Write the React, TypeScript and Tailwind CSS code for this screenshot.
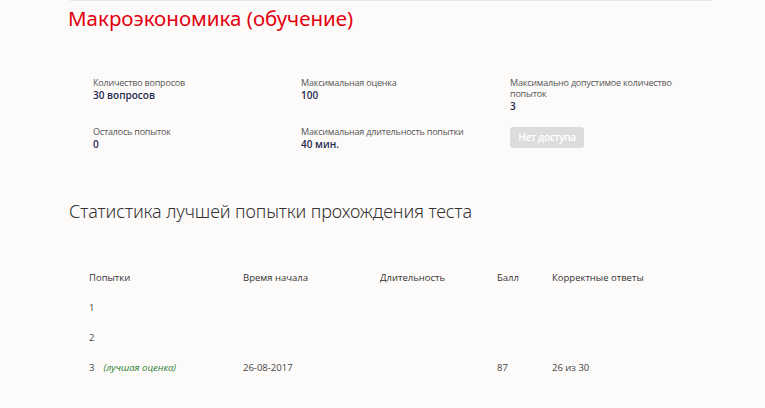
import React from "react";

const info = [
  { label: "Количество вопросов", value: "30 вопросов" },
  { label: "Максимальная оценка", value: "100" },
  { label: "Максимально допустимое количество попыток", value: "3" },
  { label: "Осталось попыток", value: "0" },
  { label: "Максимальная длительность попытки", value: "40 мин." },
];

const rows = [
  { n: "1", best: false, start: "", dur: "", score: "", correct: "" },
  { n: "2", best: false, start: "", dur: "", score: "", correct: "" },
  { n: "3", best: true, start: "26-08-2017", dur: "", score: "87", correct: "26 из 30" },
];

export default function App() {
  return (
    <div className="w-[765px] h-[408px] overflow-hidden bg-[#fdfbfa] font-['Open_Sans',sans-serif]">
      <div className="ml-[70px] w-[642px] border-t border-[#ebe9e8]" />

      <h1 className="ml-[68px] mt-[4px] text-[20.5px] leading-[26px] text-[#e3000f] font-['Noto_Sans',sans-serif]">
        Макроэкономика (обучение)
      </h1>

      {/* summary */}
      <div className="ml-[93px] mt-[46px] grid grid-cols-[208px_209px_165px] gap-y-[22px] text-[9px] leading-[11px] text-[#555]">
        {info.map((item) => (
          <div key={item.label} className="h-[27px]">
            <div className="tracking-[-0.2px]">{item.label}</div>
            <div className="mt-[1px] text-[10px] leading-[12px] font-semibold text-[#1e2a4f]">
              {item.value}
            </div>
          </div>
        ))}
        <div>
          <button className="mt-[1px] h-[21px] w-[74px] rounded-[3px] bg-[#dcdcdc] text-[10px] font-semibold text-white tracking-[-0.3px]">
            Нет доступа
          </button>
        </div>
      </div>

      <h2 className="ml-[69px] mt-[47px] text-[18px] leading-[22px] font-light text-[#333] font-['Noto_Sans',sans-serif] tracking-[-0.1px]">
        Статистика лучшей попытки прохождения теста
      </h2>

      {/* table */}
      <div className="ml-[89px] mt-[44px] text-[9.5px] text-[#444]">
        <div className="grid grid-cols-[154px_137px_117px_55px_auto] h-[24px] items-center font-medium text-[#333]">
          <div>Попытки</div>
          <div>Время начала</div>
          <div>Длительность</div>
          <div>Балл</div>
          <div>Корректные ответы</div>
        </div>
        <div className="mt-[3px]">
          {rows.map((r) => (
            <div
              key={r.n}
              className="grid grid-cols-[154px_137px_117px_55px_auto] h-[30px] items-center"
            >
              <div className="flex items-center gap-[9px]">
                <span>{r.n}</span>
                {r.best && <span className="italic text-[#2e7d32] text-[9.5px]">(лучшая оценка)</span>}
              </div>
              <div>{r.start}</div>
              <div>{r.dur}</div>
              <div>{r.score}</div>
              <div>{r.correct}</div>
            </div>
          ))}
        </div>
      </div>
    </div>
  );
}
